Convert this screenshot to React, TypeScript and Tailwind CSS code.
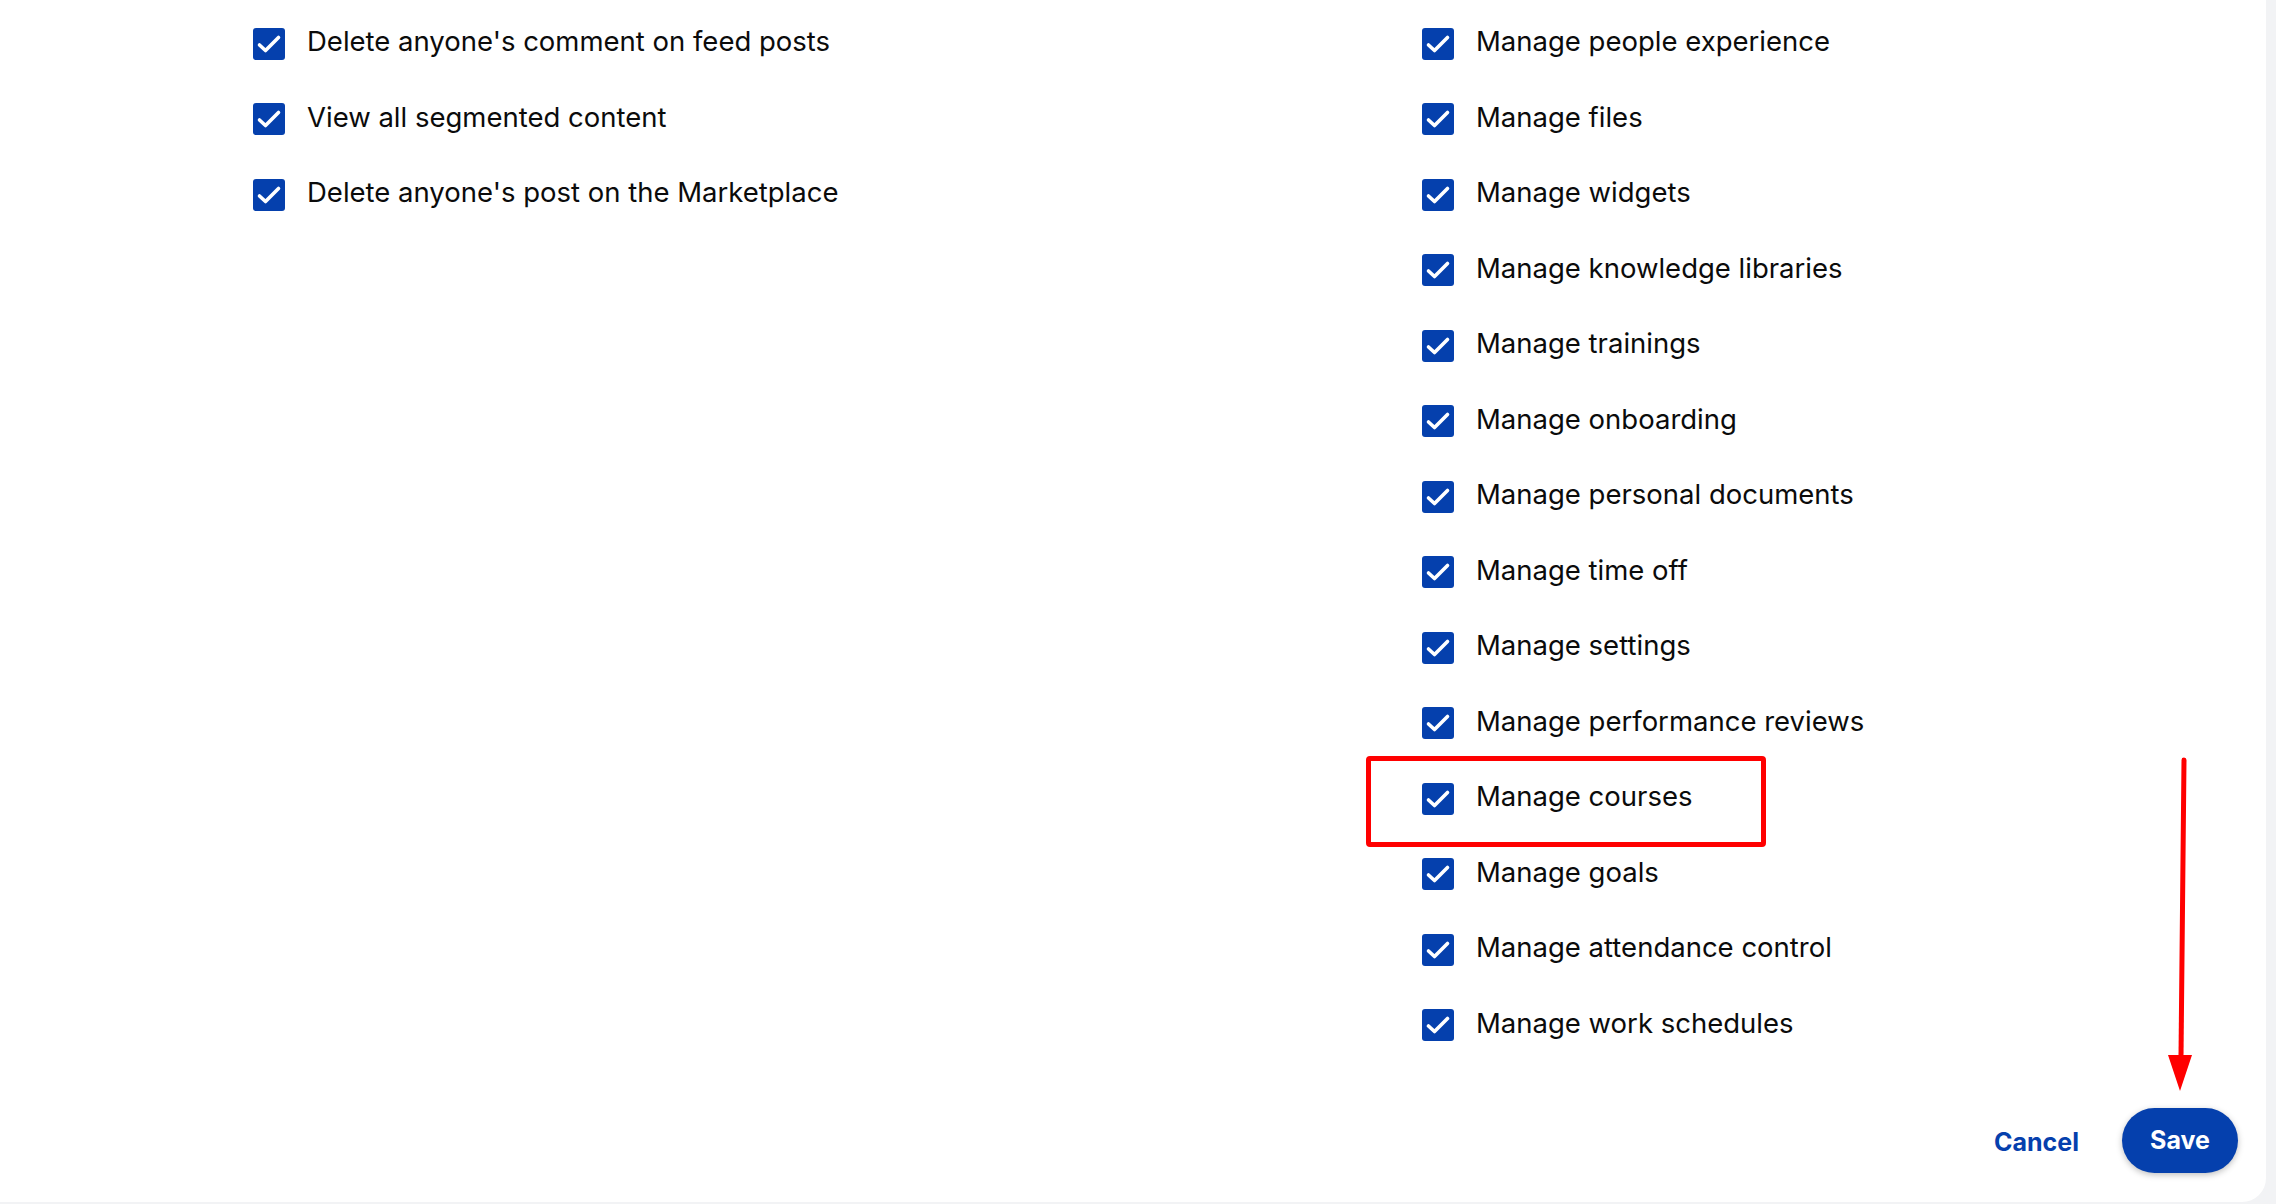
import React from 'react'

const leftItems = [
  "Delete anyone's comment on feed posts",
  'View all segmented content',
  "Delete anyone's post on the Marketplace",
]

const rightItems = [
  'Manage people experience',
  'Manage files',
  'Manage widgets',
  'Manage knowledge libraries',
  'Manage trainings',
  'Manage onboarding',
  'Manage personal documents',
  'Manage time off',
  'Manage settings',
  'Manage performance reviews',
  'Manage courses',
  'Manage goals',
  'Manage attendance control',
  'Manage work schedules',
]

function CheckBox() {
  return (
    <span className="flex h-8 w-8 shrink-0 items-center justify-center rounded-[3px] bg-[#0540ad]">
      <svg width="32" height="32" viewBox="0 0 32 32" fill="none">
        <path d="M6.5 17 L12.5 22.5 L25.5 9.5" stroke="white" strokeWidth="3.6" strokeLinecap="round" strokeLinejoin="round" />
      </svg>
    </span>
  )
}

function Row({ label, highlight }: { label: string; highlight?: boolean }) {
  return (
    <div className="relative flex h-[75.5px] items-center gap-[22px]">
      <CheckBox />
      <span className="-translate-y-[2px] text-[27.5px] text-[#0b0b0b]">{label}</span>
      {highlight && (
        <div className="pointer-events-none absolute left-[-56px] top-[-5px] h-[91px] w-[400px] rounded-[4px] border-[5px] border-[#ff0000]" />
      )}
    </div>
  )
}

export default function App() {
  return (
    <div className="h-[1204px] w-full overflow-hidden bg-[#f2f3f5]" style={{ fontFamily: 'Inter, "Liberation Sans", sans-serif' }}>
      <div className="relative mr-[10px] h-[1202px] rounded-br-[24px] bg-white">
        <div className="flex pt-[6px] pl-[253px]">
          <div className="w-[1169px]">
            {leftItems.map((l) => (
              <Row key={l} label={l} />
            ))}
          </div>
          <div>
            {rightItems.map((l) => (
              <Row key={l} label={l} highlight={l === 'Manage courses'} />
            ))}
          </div>
        </div>

        <div className="mt-[45px] flex items-center justify-end gap-[43px] pr-[28px]">
          <button className="translate-y-[2px] text-[25px] font-bold text-[#0540ad]">Cancel</button>
          <button className="h-[65px] w-[116px] rounded-full bg-[#0540ad] text-[25px] font-bold text-white shadow-[0_2px_6px_rgba(0,0,0,0.25)]">
            Save
          </button>
        </div>

        {/* annotation arrow */}
        <svg className="pointer-events-none absolute left-[2160px] top-[755px]" width="40" height="340" viewBox="0 0 40 340">
          <path d="M24 5 L21 302" stroke="#ff0000" strokeWidth="5" strokeLinecap="round" />
          <path d="M8 300 L32 300 L20 336 Z" fill="#ff0000" />
        </svg>
      </div>
    </div>
  )
}
